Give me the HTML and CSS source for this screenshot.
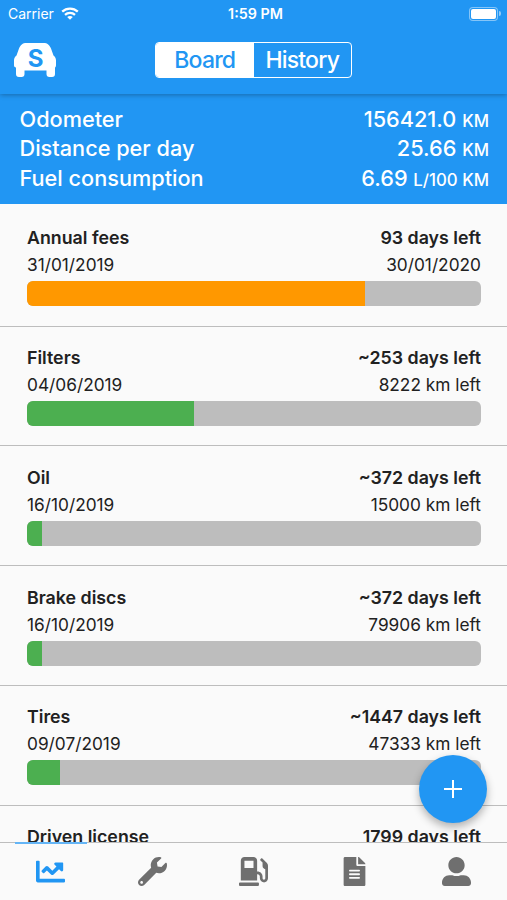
FILE: index.html
```
<!DOCTYPE html>
<html lang="en">
<head>
  <meta charset="UTF-8">
  <meta name="viewport" content="width=device-width, initial-scale=1.0">
  <title>Board</title>
  <link rel="stylesheet" href="styles.css">
</head>
<body>
  <header class="header">
    <div class="status-bar">
      <div class="status-carrier">
        <span>Carrier</span>
        <svg class="wifi" viewBox="0 0 18 13" fill="none" stroke="#fff" stroke-width="2.3">
          <path d="M1.2 4.7C5.6.6 12.4.6 16.8 4.7"/>
          <path d="M4 7.8c2.8-2.6 7.2-2.6 10 0"/>
          <path d="M9 12.8L6.2 10c1.6-1.4 4-1.4 5.6 0z" fill="#fff" stroke="none"/>
        </svg>
      </div>
      <div class="status-time">1:59 PM</div>
      <div class="status-battery">
        <div class="battery"></div>
        <div class="battery-tip"></div>
      </div>
    </div>

    <div class="navbar">
      <svg class="logo" viewBox="0 0 42 34">
        <path fill="#fff" d="M12.500 0h17c4 0 6 2 7.500 5.500l2.500 7c1.700 1.200 2.500 3 2.500 5V22c0 1.500-.5 2.200-1 2.500V31c0 2-1 3-3 3h-2.500c-2 0-3-1-3-3v-3.500h-22V31c0 2-1 3-3 3H5c-2 0-3-1-3-3v-6.500C.5 24.200 0 23.500 0 22v-4.500c0-2 .8-3.800 2.500-5l2.500-7C6.500 2 8.500 0 12.500 0z"/>
        <text class="logo-letter" x="21.500" y="23.700" text-anchor="middle">S</text>
      </svg>
      <div class="segments">
        <button class="segment active">Board</button>
        <button class="segment">History</button>
      </div>
    </div>
  </header>

  <section class="summary">
    <div class="summary-row">
      <span class="summary-label">Odometer</span>
      <span class="summary-value">156421.0 <small>KM</small></span>
    </div>
    <div class="summary-row">
      <span class="summary-label">Distance per day</span>
      <span class="summary-value">25.66 <small>KM</small></span>
    </div>
    <div class="summary-row">
      <span class="summary-label">Fuel consumption</span>
      <span class="summary-value">6.69 <small>L/100 KM</small></span>
    </div>
  </section>

  <main class="list">
    <div class="item">
      <div class="item-title"><span>Annual fees</span><span>93 days left</span></div>
      <div class="item-info"><span>31/01/2019</span><span>30/01/2020</span></div>
      <div class="progress"><div class="progress-fill warning" style="width: 74.5%"></div></div>
    </div>
    <div class="item">
      <div class="item-title"><span>Filters</span><span>~253 days left</span></div>
      <div class="item-info"><span>04/06/2019</span><span>8222 km left</span></div>
      <div class="progress"><div class="progress-fill" style="width: 36.8%"></div></div>
    </div>
    <div class="item">
      <div class="item-title"><span>Oil</span><span>~372 days left</span></div>
      <div class="item-info"><span>16/10/2019</span><span>15000 km left</span></div>
      <div class="progress"><div class="progress-fill" style="width: 3.4%"></div></div>
    </div>
    <div class="item">
      <div class="item-title"><span>Brake discs</span><span>~372 days left</span></div>
      <div class="item-info"><span>16/10/2019</span><span>79906 km left</span></div>
      <div class="progress"><div class="progress-fill" style="width: 3.4%"></div></div>
    </div>
    <div class="item">
      <div class="item-title"><span>Tires</span><span>~1447 days left</span></div>
      <div class="item-info"><span>09/07/2019</span><span>47333 km left</span></div>
      <div class="progress"><div class="progress-fill" style="width: 7.2%"></div></div>
    </div>
    <div class="item">
      <div class="item-title"><span>Driven license</span><span>1799 days left</span></div>
    </div>
  </main>

  <button class="fab" aria-label="Add">
    <svg viewBox="0 0 18 18" stroke="#fff" stroke-width="2"><path d="M9 0v18M0 9h18"/></svg>
  </button>

  <nav class="tabs">
    <a class="tab active">
      <svg viewBox="0 0 512 512"><path d="M496 384H64V80c0-8.840-7.160-16-16-16H16C7.160 64 0 71.160 0 80v336c0 17.670 14.330 32 32 32h464c8.840 0 16-7.160 16-16v-32c0-8.840-7.160-16-16-16zM464 96H345.940c-21.380 0-32.090 25.850-16.970 40.970l32.400 32.400L288 242.750l-73.370-73.370c-12.500-12.500-32.760-12.500-45.250 0l-68.690 68.690c-6.250 6.250-6.250 16.380 0 22.630l22.620 22.620c6.250 6.250 16.380 6.250 22.630 0L192 237.250l73.370 73.370c12.500 12.500 32.760 12.500 45.250 0l96-96 32.400 32.400c15.120 15.120 40.970 4.410 40.970-16.970V112c.01-8.840-7.150-16-15.990-16z"/></svg>
    </a>
    <a class="tab">
      <svg viewBox="0 0 512 512"><path d="M507.730 109.100c-2.240-9.030-13.540-12.090-20.120-5.510l-74.360 74.360-67.880-11.310-11.310-67.880 74.360-74.360c6.620-6.620 3.430-17.900-5.660-20.160-47.380-11.740-99.550.91-136.580 37.930-39.640 39.640-50.550 97.100-34.050 147.200L18.740 402.760c-24.990 24.990-24.990 65.510 0 90.500 24.990 24.990 65.510 24.990 90.500 0l213.210-213.210c50.120 16.710 107.470 5.680 147.370-34.220 37.070-37.070 49.700-89.320 37.910-136.730zM64 472c-13.250 0-24-10.750-24-24 0-13.260 10.750-24 24-24s24 10.740 24 24c0 13.250-10.750 24-24 24z"/></svg>
    </a>
    <a class="tab">
      <svg viewBox="0 0 512 512"><path d="M336 448H16c-8.800 0-16 7.200-16 16v32c0 8.800 7.200 16 16 16h320c8.800 0 16-7.200 16-16v-32c0-8.800-7.200-16-16-16zm157.200-340.700l-81-81c-6.200-6.200-16.400-6.200-22.600 0l-11.300 11.300c-6.200 6.200-6.200 16.400 0 22.600L416 97.900V160c0 28.100 20.900 51.300 48 55.200V376c0 13.200-10.800 24-24 24s-24-10.800-24-24v-32c0-48.600-39.400-88-88-88h-8V64c0-35.300-28.700-64-64-64H96C60.700 0 32 28.700 32 64v352h288V304h8c22.100 0 40 17.900 40 40v27.800c0 37.700 27 72 64.500 75.900 43 4.300 79.500-29.500 79.500-71.700V152.600c0-17-6.800-33.300-18.800-45.300zM256 192H96V64h160v128z"/></svg>
    </a>
    <a class="tab">
      <svg viewBox="-64 0 512 512"><path d="M224 136V0H24C10.700 0 0 10.700 0 24v464c0 13.300 10.700 24 24 24h336c13.300 0 24-10.700 24-24V160H248c-13.200 0-24-10.800-24-24zm64 236c0 6.600-5.400 12-12 12H108c-6.600 0-12-5.400-12-12v-8c0-6.600 5.400-12 12-12h168c6.600 0 12 5.400 12 12v8zm0-64c0 6.600-5.400 12-12 12H108c-6.600 0-12-5.400-12-12v-8c0-6.600 5.400-12 12-12h168c6.600 0 12 5.400 12 12v8zm0-72v8c0 6.600-5.400 12-12 12H108c-6.600 0-12-5.400-12-12v-8c0-6.600 5.400-12 12-12h168c6.600 0 12 5.400 12 12zm96-114.100v6.100H256V0h6.100c6.400 0 12.500 2.500 17 7l97.900 98c4.500 4.500 7 10.600 7 16.900z"/></svg>
    </a>
    <a class="tab">
      <svg viewBox="0 0 512 512"><path d="M256 288c79.500 0 144-64.500 144-144S335.500 0 256 0 112 64.500 112 144s64.500 144 144 144zm128 32h-55.100c-22.200 10.200-46.900 16-72.900 16s-50.600-5.800-72.900-16H128C57.300 320 0 377.300 0 448v16c0 26.500 21.500 48 48 48h416c26.500 0 48-21.500 48-48v-16c0-70.700-57.300-128-128-128z"/></svg>
    </a>
  </nav>
</body>
</html>
```
FILE: styles.css
```
* {
  box-sizing: border-box;
}

body {
  display: flex;
  flex-direction: column;
  height: 900px;
  margin: 0;
  overflow: hidden;
  background-color: #fafafa;
  color: #212121;
  font-family: 'Inter', sans-serif;
}

button {
  padding: 0;
  border: none;
  font-family: inherit;
}

.header {
  position: relative;
  z-index: 1;
  flex: none;
  height: 94px;
  background-color: #2196f3;
  color: #fff;
  box-shadow: 0 1px 5px rgba(0, 0, 0, 0.3);
}

.status-bar {
  display: grid;
  grid-template-columns: 1fr auto 1fr;
  align-items: center;
  height: 27px;
  padding: 0 6px 0 8px;
  font-size: 14px;
}

.status-carrier {
  display: flex;
  align-items: center;
  gap: 7px;
}

.wifi {
  width: 18px;
  height: 13px;
}

.status-time {
  padding-left: 2px;
  font-size: 14.3px;
  font-weight: 600;
}

.status-battery {
  display: flex;
  justify-content: flex-end;
  align-items: center;
  gap: 1px;
}

.battery {
  width: 29px;
  height: 14px;
  padding: 1px;
  border: 1px solid rgba(255, 255, 255, 0.45);
  border-radius: 4px;
  background-color: #fff;
  background-clip: content-box;
}

.battery-tip {
  width: 2px;
  height: 5px;
  border-radius: 0 2px 2px 0;
  background-color: rgba(255, 255, 255, 0.5);
}

.navbar {
  display: grid;
  grid-template-columns: 1fr auto 1fr;
  align-items: center;
  height: 66px;
  padding: 0 14px;
}

.logo {
  width: 42px;
  height: 34px;
}

.logo-letter {
  fill: #2196f3;
  font-size: 24px;
  font-weight: 700;
}

.segments {
  display: flex;
  width: 197px;
  height: 36px;
  border: 1px solid #fff;
  border-radius: 4px;
  overflow: hidden;
}

.segment {
  flex: 1;
  background-color: transparent;
  color: #fff;
  font-size: 23px;
  font-weight: 500;
  letter-spacing: -0.8px;
}

.segment.active {
  background-color: #fff;
  color: #2196f3;
}

.summary {
  flex: none;
  height: 109.5px;
  padding: 11px 18px 0 19.5px;
  background-color: #2196f3;
  color: #fff;
}

.summary-row {
  display: flex;
  justify-content: space-between;
  height: 29.3px;
  font-size: 21.7px;
  font-weight: 500;
  line-height: 29.5px;
}

.summary-row small {
  font-size: 16.8px;
}

.list {
  flex: 1;
  min-height: 0;
  overflow: hidden;
}

.item {
  height: 119.75px;
  padding: 17.5px 26px 0 27px;
  border-bottom: 1px solid #bdbdbd;
}

.item:first-child {
  height: 123px;
  padding-top: 20.5px;
}

.item-title,
.item-info {
  display: flex;
  justify-content: space-between;
  height: 27px;
  font-size: 17.3px;
  line-height: 27px;
}

.item-title {
  font-size: 17.8px;
  font-weight: 600;
}

.progress {
  height: 25px;
  margin-top: 3px;
  border-radius: 6px;
  background-color: #bdbdbd;
  overflow: hidden;
}

.progress-fill {
  height: 100%;
  background-color: #4caf50;
}

.progress-fill.warning {
  background-color: #ff9800;
}

.fab {
  position: absolute;
  right: 20px;
  bottom: 77px;
  display: flex;
  justify-content: center;
  align-items: center;
  width: 68px;
  height: 68px;
  border-radius: 50%;
  background-color: #2196f3;
  box-shadow: 0 4px 9px rgba(0, 0, 0, 0.3);
}

.fab svg {
  width: 18px;
  height: 18px;
}

.tabs {
  display: flex;
  flex: none;
  height: 58px;
  border-top: 1px solid #bdbdbd;
}

.tab {
  position: relative;
  flex: 1;
  display: flex;
  justify-content: center;
  align-items: center;
}

.tab svg {
  width: 29px;
  height: 29px;
  fill: #6f6f6f;
}

.tab.active svg {
  fill: #2196f3;
}

.tab.active::before {
  content: "";
  position: absolute;
  top: -1px;
  left: 15px;
  width: 72px;
  height: 2px;
  background-color: #64b5f6;
}
```
